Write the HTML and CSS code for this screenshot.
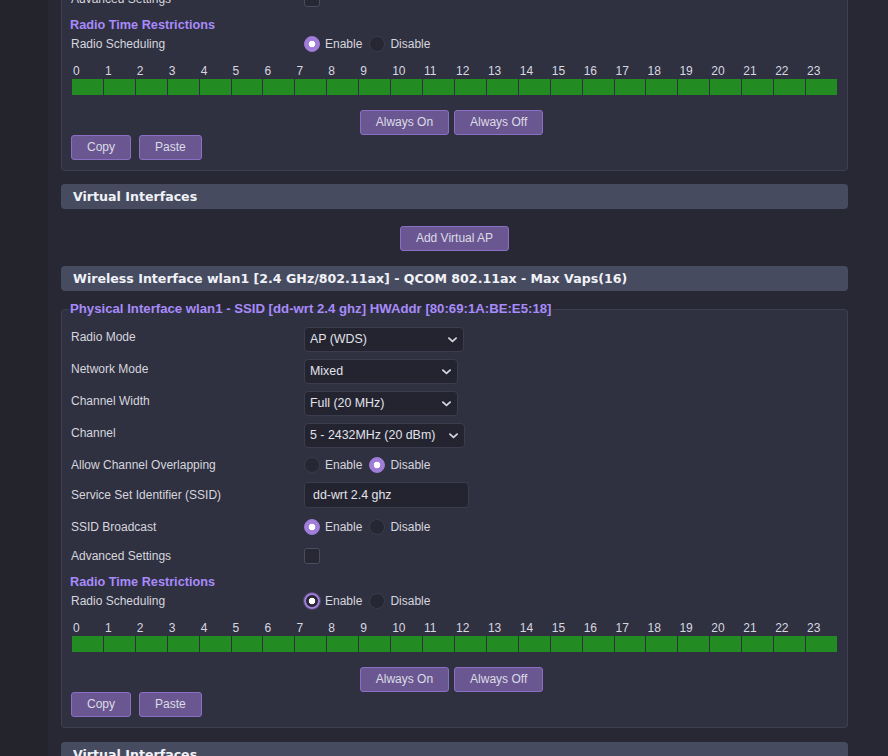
FILE: index.html
```html
<!DOCTYPE html>
<html lang="en">
<head>
<meta charset="utf-8">
<title>Wireless - Basic Settings</title>
<link rel="stylesheet" href="styles.css">
</head>
<body>
<div class="shell">
  <aside class="rail"></aside>
  <main class="main">
    <div class="scroll">

      <h2 class="section-head">Wireless Interface wlan0 [5 GHz/802.11ax] - QCOM 802.11ax - Max Vaps(16)</h2>
      <fieldset class="iface iface-first">
        <legend>Physical Interface wlan0 - SSID [dd-wrt 5 ghz] HWAddr [80:69:1A:BE:E5:19]</legend>
        <div class="field f-select">
          <span class="label">Radio Mode</span>
          <span class="select-wrap"><select class="w160"><option>AP (WDS)</option></select><svg class="chev" viewBox="0 0 10 6"><path d="M1 1l4 3.6L9 1"/></svg></span>
        </div>
        <div class="field f-select">
          <span class="label">Network Mode</span>
          <span class="select-wrap"><select class="w154"><option>Mixed</option></select><svg class="chev" viewBox="0 0 10 6"><path d="M1 1l4 3.6L9 1"/></svg></span>
        </div>
        <div class="field f-select">
          <span class="label">Channel Width</span>
          <span class="select-wrap"><select class="w154"><option>VHT80 (80 MHz)</option></select><svg class="chev" viewBox="0 0 10 6"><path d="M1 1l4 3.6L9 1"/></svg></span>
        </div>
        <div class="field f-select">
          <span class="label">Channel</span>
          <span class="select-wrap"><select class="w161"><option>36 - 5180MHz (23 dBm)</option></select><svg class="chev" viewBox="0 0 10 6"><path d="M1 1l4 3.6L9 1"/></svg></span>
        </div>
        <div class="field f-overlap">
          <span class="label">Allow Channel Overlapping</span>
          <span class="opts">
            <label class="opt"><input type="radio" name="ov0">Enable</label>
            <label class="opt"><input type="radio" name="ov0" checked>Disable</label>
          </span>
        </div>
        <div class="field f-input">
          <span class="label">Service Set Identifier (SSID)</span>
          <input class="text" type="text" value="dd-wrt 5 ghz">
        </div>
        <div class="field f-radio">
          <span class="label">SSID Broadcast</span>
          <span class="opts">
            <label class="opt"><input type="radio" name="bc0" checked>Enable</label>
            <label class="opt"><input type="radio" name="bc0">Disable</label>
          </span>
        </div>
        <div class="field f-check">
          <span class="label">Advanced Settings</span>
          <input class="check" type="checkbox">
        </div>
        <h3 class="sub-head">Radio Time Restrictions</h3>
        <div class="field f-sched">
          <span class="label">Radio Scheduling</span>
          <span class="opts">
            <label class="opt"><input type="radio" name="rs0" checked>Enable</label>
            <label class="opt"><input type="radio" name="rs0">Disable</label>
          </span>
        </div>
        <div class="hours">
          <span>0</span><span>1</span><span>2</span><span>3</span><span>4</span><span>5</span><span>6</span><span>7</span><span>8</span><span>9</span><span>10</span><span>11</span><span>12</span><span>13</span><span>14</span><span>15</span><span>16</span><span>17</span><span>18</span><span>19</span><span>20</span><span>21</span><span>22</span><span>23</span>
          <i></i><i></i><i></i><i></i><i></i><i></i><i></i><i></i><i></i><i></i><i></i><i></i><i></i><i></i><i></i><i></i><i></i><i></i><i></i><i></i><i></i><i></i><i></i><i></i>
        </div>
        <div class="sched-actions">
          <button class="btn">Always On</button>
          <button class="btn">Always Off</button>
        </div>
        <div class="copy-actions">
          <button class="btn">Copy</button>
          <button class="btn">Paste</button>
        </div>
      </fieldset>

      <h2 class="section-head">Virtual Interfaces</h2>
      <div class="center-row"><button class="btn">Add Virtual AP</button></div>

      <h2 class="section-head">Wireless Interface wlan1 [2.4 GHz/802.11ax] - QCOM 802.11ax - Max Vaps(16)</h2>
      <fieldset class="iface">
        <legend>Physical Interface wlan1 - SSID [dd-wrt 2.4 ghz] HWAddr [80:69:1A:BE:E5:18]</legend>
        <div class="field f-select">
          <span class="label">Radio Mode</span>
          <span class="select-wrap"><select class="w160"><option>AP (WDS)</option></select><svg class="chev" viewBox="0 0 10 6"><path d="M1 1l4 3.6L9 1"/></svg></span>
        </div>
        <div class="field f-select">
          <span class="label">Network Mode</span>
          <span class="select-wrap"><select class="w154"><option>Mixed</option></select><svg class="chev" viewBox="0 0 10 6"><path d="M1 1l4 3.6L9 1"/></svg></span>
        </div>
        <div class="field f-select">
          <span class="label">Channel Width</span>
          <span class="select-wrap"><select class="w154"><option>Full (20 MHz)</option></select><svg class="chev" viewBox="0 0 10 6"><path d="M1 1l4 3.6L9 1"/></svg></span>
        </div>
        <div class="field f-select">
          <span class="label">Channel</span>
          <span class="select-wrap"><select class="w161"><option>5 - 2432MHz (20 dBm)</option></select><svg class="chev" viewBox="0 0 10 6"><path d="M1 1l4 3.6L9 1"/></svg></span>
        </div>
        <div class="field f-overlap">
          <span class="label">Allow Channel Overlapping</span>
          <span class="opts">
            <label class="opt"><input type="radio" name="ov1">Enable</label>
            <label class="opt"><input type="radio" name="ov1" checked>Disable</label>
          </span>
        </div>
        <div class="field f-input">
          <span class="label">Service Set Identifier (SSID)</span>
          <input class="text" type="text" value="dd-wrt 2.4 ghz">
        </div>
        <div class="field f-radio">
          <span class="label">SSID Broadcast</span>
          <span class="opts">
            <label class="opt"><input type="radio" name="bc1" checked>Enable</label>
            <label class="opt"><input type="radio" name="bc1">Disable</label>
          </span>
        </div>
        <div class="field f-check">
          <span class="label">Advanced Settings</span>
          <input class="check" type="checkbox">
        </div>
        <h3 class="sub-head">Radio Time Restrictions</h3>
        <div class="field f-sched">
          <span class="label">Radio Scheduling</span>
          <span class="opts">
            <label class="opt"><input class="is-focused" type="radio" name="rs1" checked>Enable</label>
            <label class="opt"><input type="radio" name="rs1">Disable</label>
          </span>
        </div>
        <div class="hours">
          <span>0</span><span>1</span><span>2</span><span>3</span><span>4</span><span>5</span><span>6</span><span>7</span><span>8</span><span>9</span><span>10</span><span>11</span><span>12</span><span>13</span><span>14</span><span>15</span><span>16</span><span>17</span><span>18</span><span>19</span><span>20</span><span>21</span><span>22</span><span>23</span>
          <i></i><i></i><i></i><i></i><i></i><i></i><i></i><i></i><i></i><i></i><i></i><i></i><i></i><i></i><i></i><i></i><i></i><i></i><i></i><i></i><i></i><i></i><i></i><i></i>
        </div>
        <div class="sched-actions">
          <button class="btn">Always On</button>
          <button class="btn">Always Off</button>
        </div>
        <div class="copy-actions">
          <button class="btn">Copy</button>
          <button class="btn">Paste</button>
        </div>
      </fieldset>

      <h2 class="section-head">Virtual Interfaces</h2>
      <div class="center-row"><button class="btn">Add Virtual AP</button></div>

    </div>
  </main>
</div>
</body>
</html>
```

FILE: styles.css
```css
* { box-sizing: border-box; }

html, body {
  margin: 0;
  padding: 0;
  height: 100%;
  overflow: hidden;
  background: #272833;
}

body {
  font-family: "Liberation Sans", Arial, sans-serif;
  font-size: 12px;
  color: #d6d6de;
}

.shell {
  display: flex;
  height: 756px;
  overflow: hidden;
}

.rail {
  width: 48px;
  flex: none;
  background: #23242c;
}

.main {
  flex: 1;
  background: #272833;
  overflow: hidden;
}

/* emulates the page being scrolled down to this position */
.scroll {
  width: 787px;
  margin: -291px 0 0 13px;
}

.section-head {
  margin: 0;
  height: 25px;
  line-height: 26px;
  padding-left: 12px;
  background: #464b60;
  border-radius: 4px;
  color: #f1f2f7;
  font-family: "DejaVu Sans", Verdana, sans-serif;
  font-weight: bold;
  font-size: 12.6px;
}

.iface {
  margin: 10px 0 14px;
  padding: 6px 9px 10px;
  border: 1px solid #3e3f51;
  border-radius: 4px;
  background: #2f3040;
  min-width: 0;
}

.iface-first { margin-bottom: 13px; }

.iface legend {
  margin-left: -3px;
  padding: 0 2px;
  line-height: 16px;
  font-size: 13.2px;
  font-weight: bold;
  color: #a78bfa;
}

.field {
  display: flex;
  align-items: center;
}

.label {
  width: 233px;
  flex: none;
  line-height: 15px;
}

.f-select { height: 32px; }
.f-select .label { margin-bottom: 3px; }
.f-overlap { height: 28px; }
.f-input { height: 32px; }
.f-radio { height: 32px; }
.f-check { height: 26px; }
.f-sched { height: 14px; }

.select-wrap {
  position: relative;
  display: inline-block;
}

.select-wrap select {
  appearance: none;
  -webkit-appearance: none;
  display: block;
  height: 25px;
  margin: 0;
  padding: 0 20px 0 5px;
  border: 1px solid #3b3c4d;
  border-radius: 4px;
  background: #232430;
  color: #e2e2ea;
  font-family: "Liberation Sans", Arial, sans-serif;
  font-size: 12.4px;
  outline: none;
}

.w160 { width: 160px; }
.w154 { width: 154px; }
.w161 { width: 161px; }

.chev {
  position: absolute;
  right: 7px;
  top: 10px;
  width: 9px;
  height: 6px;
  fill: none;
  stroke: #d3d3db;
  stroke-width: 2;
  stroke-linecap: round;
  stroke-linejoin: round;
  pointer-events: none;
}

.text {
  width: 165px;
  height: 26px;
  margin: 0;
  padding: 0 8px;
  border: 1px solid #3b3c4d;
  border-radius: 4px;
  background: #232430;
  color: #e2e2ea;
  font-family: "Liberation Sans", Arial, sans-serif;
  font-size: 12.4px;
  outline: none;
}

.opts {
  display: flex;
  align-items: center;
  gap: 7px;
}

.opt {
  display: flex;
  align-items: center;
  gap: 5px;
  line-height: 15px;
}

.opt input[type="radio"] {
  appearance: none;
  -webkit-appearance: none;
  width: 16px;
  height: 16px;
  margin: 0;
  border-radius: 50%;
  border: 1px solid #3a3b4b;
  background: #262733;
  flex: none;
}

.opt input[type="radio"]:checked {
  border-color: #9f7dd9;
  background: radial-gradient(circle, #ffffff 0 3px, #9f7dd9 3.6px);
}

.opt input[type="radio"].is-focused {
  border: 2px solid #9f7dd9;
  background: radial-gradient(circle, #ffffff 0 3px, #262733 3.6px);
  box-shadow: 0 0 0 1px rgba(159, 125, 217, 0.35);
}

.check {
  appearance: none;
  -webkit-appearance: none;
  width: 16px;
  height: 16px;
  margin: 0;
  border: 1px solid #4a4b5c;
  border-radius: 3px;
  background: #272833;
}

.sub-head {
  margin: 0 0 0 -1px;
  height: 25px;
  line-height: 26px;
  font-size: 12.7px;
  font-weight: bold;
  color: #a78bfa;
}

.hours {
  margin: 12px 1px 0;
  display: grid;
  grid-template-columns: repeat(24, 1fr);
  grid-template-rows: 15px 16px;
  column-gap: 1px;
  row-gap: 1px;
}

.hours span {
  line-height: 16px;
  padding-left: 1px;
  color: #d8d8e0;
}

.hours i {
  display: block;
  background: #228b22;
}

.sched-actions {
  margin-top: 15px;
  display: flex;
  justify-content: center;
  gap: 5px;
  padding-right: 6px;
}

.copy-actions {
  display: flex;
  gap: 8px;
}

.btn {
  height: 25px;
  margin: 0;
  padding: 0 15px;
  border: 1px solid #8a6fc4;
  border-radius: 3px;
  background: #6a5792;
  color: #dcdce4;
  font-family: "Liberation Sans", Arial, sans-serif;
  font-size: 12px;
  line-height: 23px;
}

.center-row {
  display: flex;
  justify-content: center;
  margin: 17px 0 15px;
}
```
